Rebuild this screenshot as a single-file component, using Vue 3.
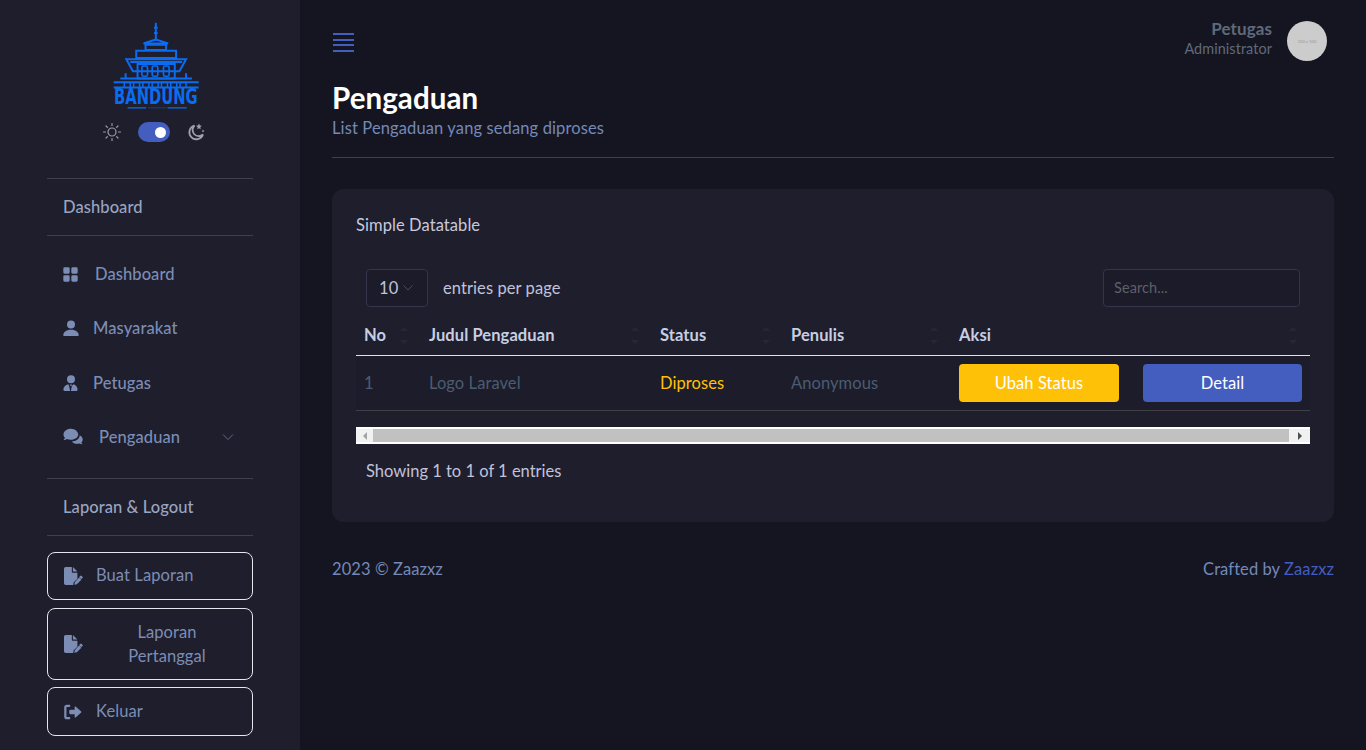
<script setup>
const menu = [
  { label: 'Dashboard', icon: 'grid', gap: 'g1', box: '0.700 0.700 14.600 14.600' },
  { label: 'Masyarakat', icon: 'person', gap: 'g2', box: '0 0 16 16' },
  { label: 'Petugas', icon: 'tie', gap: 'g2', box: '0 0 16 16' },
  { label: 'Pengaduan', icon: 'chat', gap: 'g3', box: '0 0.500 20 16', chevron: true },
]
const paths = {
  grid: 'M1 2.300A1.300 1.300 0 0 1 2.300 1h3.600a1.300 1.300 0 0 1 1.300 1.300v3.600a1.300 1.300 0 0 1-1.300 1.300H2.300A1.300 1.300 0 0 1 1 5.900zm7.800 0A1.300 1.300 0 0 1 10.100 1h3.600A1.300 1.300 0 0 1 15 2.300v3.600a1.300 1.300 0 0 1-1.300 1.300h-3.600a1.300 1.300 0 0 1-1.300-1.300zM1 10.100a1.300 1.300 0 0 1 1.300-1.300h3.600a1.300 1.300 0 0 1 1.300 1.300v3.600A1.300 1.300 0 0 1 5.900 15H2.300A1.300 1.300 0 0 1 1 13.700zm7.800 0a1.300 1.300 0 0 1 1.300-1.300h3.600a1.300 1.300 0 0 1 1.300 1.300v3.600a1.300 1.300 0 0 1-1.300 1.300h-3.600a1.300 1.300 0 0 1-1.300-1.300z',
  person: 'M1.300 16c-.7 0-1-.4-1-1 0-2.600 2.600-5.300 7.700-5.300s7.700 2.700 7.700 5.300c0 .6-.3 1-1 1H1.300zM8 8.400a4 4 0 1 0 0-8 4 4 0 0 0 0 8z',
  tie: 'M8 8.200a4 4 0 1 0 0-8 4 4 0 0 0 0 8zM5.300 9.300C2.400 9.800.4 12 .4 14.800c0 .7.5 1.200 1.100 1.200h5.600l-1-5.200zm5.400 0-1.800 1.500-1 5.200h5.600c.6 0 1.100-.5 1.100-1.200 0-2.800-2-5-3.900-5.500zM7 9.500h2L8.500 11h-1z',
  chat: 'M7.500 1C3.600 1 .5 3.400.5 6.500c0 1.300.5 2.400 1.400 3.300-.3.800-.9 1.500-1.400 2 1.300 0 2.400-.4 3.200-1 1 .5 2.300.7 3.800.7 3.900 0 7-2.300 7-5S11.400 1 7.500 1zM16 7c0 3.400-3.300 6-7.600 6.200 1 1.400 2.900 2.300 5 2.300.8 0 1.500-.1 2.200-.3.800.5 1.900.8 3 .8-.4-.5-.9-1.100-1.200-1.800.9-.8 1.400-1.800 1.400-2.900 0-1.800-1.200-3.300-3-4.100.1.200.2.500.2.800z',
  file: 'M1.500 0A1.500 1.500 0 0 0 0 1.500v13A1.500 1.500 0 0 0 1.500 16h6.700l.5-2.300L12 10.400V5H7.800A.8.800 0 0 1 7 4.200V0H1.500zM8 0v4h4L8 0zm8.500 8.600-.7-.7a.9.900 0 0 0-1.300 0l-1 1 2 2 1-1a.9.900 0 0 0 0-1.300zM9.700 13.600l-.5 2.300 2.300-.5 4-4-2-2-3.800 4.200z',
  logout: 'M5.500 1.500h-3A2.300 2.300 0 0 0 .2 3.800v8.400a2.300 2.300 0 0 0 2.300 2.300h3v-2h-3a.3.300 0 0 1-.3-.3V3.800a.3.300 0 0 1 .3-.3h3zM10.700 3.200a.7.700 0 0 0-1.200.5V6H5.700a1 1 0 0 0-1 1v2a1 1 0 0 0 1 1h3.800v2.300a.7.700 0 0 0 1.200.5l4.700-4.300a.7.700 0 0 0 0-1z',
}
const columns = ['No', 'Judul Pengaduan', 'Status', 'Penulis', 'Aksi']
</script>

<template>
  <div class="app">
    <aside class="sidebar">
      <div class="brand">
        <svg class="logo" viewBox="95 30 265 270" fill="none" stroke="#0b6cf2" stroke-width="6">
          <path d="M227 38v54" stroke-width="6" />
          <path d="M227 50v6M227 66v6" stroke-width="11" />
          <path d="M227 88 190 100h74zM196 104v16h62v-16zM168 122v22h120v-22zM138 148h180l-20 36H158zM150 156h156" />
          <path d="M172 162v44h112v-44z" />
          <rect x="185" y="168" width="17" height="31" rx="5" stroke-width="5" />
          <rect x="216" y="168" width="17" height="31" rx="5" stroke-width="5" />
          <rect x="250" y="168" width="17" height="31" rx="5" stroke-width="5" />
          <path d="M120 206h216M100 217h256M100 233h256M136 190v16M318 190v16" />
          <path d="M132 232v-14h18v14M160 232v-14h18v14M188 232v-14h18v14M216 232v-14h18v14M244 232v-14h18v14M272 232v-14h18v14M300 232v-14h18v14" stroke-width="4.500" />
          <path d="M142 294h56M262 294h58" stroke-width="4" />
          <path d="M204 294h54" stroke-width="3" opacity=".45" />
          <text x="101" y="283" textLength="252" lengthAdjust="spacingAndGlyphs" class="logo-word">BANDUNG</text>
        </svg>
        <div class="mode">
          <svg class="mode-icon" viewBox="0 0 20 20" fill="none" stroke="#9a9aa8" stroke-width="1.200" stroke-linecap="round">
            <circle cx="10" cy="10" r="4" />
            <path d="M10 1.500v2M10 16.500v2M1.500 10h2M16.500 10h2M4 4l1.400 1.400M14.600 14.600 16 16M4 16l1.400-1.400M14.600 5.400 16 4" />
          </svg>
          <span class="switch"><span class="knob"></span></span>
          <svg class="mode-icon" viewBox="0 0 20 20" fill="none" stroke="#a0a0ae" stroke-width="1.800">
            <path d="M8.500 3.500a7 7 0 1 0 8.500 9 6 6 0 0 1-8.500-9z" />
            <path d="M13 1.500l.8 2 2 .3-1.500 1.400.4 2-1.700-1-1.700 1 .4-2L10 3.800l2-.3zM17 7.500l.5 1 1 .5-1 .5-.5 1-.5-1-1-.5 1-.5z" fill="#a0a0ae" stroke="none" />
          </svg>
        </div>
      </div>

      <div class="section-title first">Dashboard</div>
      <nav class="menu">
        <a v-for="item in menu" :key="item.label" class="menu-item">
          <svg class="nav-icon" :class="item.icon" :viewBox="item.box"><path :d="paths[item.icon]" /></svg>
          <span class="menu-label" :class="item.gap">{{ item.label }}</span>
          <svg v-if="item.chevron" class="chevron" viewBox="0 0 12 8" fill="none" stroke="#5f6a86" stroke-width="1"><path d="M1 1.500 6 6.500l5-5" /></svg>
        </a>
      </nav>

      <div class="section-title second">Laporan &amp; Logout</div>
      <div class="actions">
        <a class="action">
          <svg class="action-icon" viewBox="0 0 17 16"><path :d="paths.file" /></svg>
          <span class="single">Buat Laporan</span>
        </a>
        <a class="action tall">
          <svg class="action-icon" viewBox="0 0 17 16"><path :d="paths.file" /></svg>
          <span class="wrap">Laporan<br />Pertanggal</span>
        </a>
        <a class="action last">
          <svg class="action-icon" viewBox="0 0 17 16"><path :d="paths.logout" /></svg>
          <span class="single">Keluar</span>
        </a>
      </div>
    </aside>

    <main class="main">
      <header class="topbar">
        <div class="burger"><i></i><i></i><i></i><i></i></div>
        <div class="user">
          <div class="user-text">
            <strong>Petugas</strong>
            <span>Administrator</span>
          </div>
          <div class="avatar"><span>100 x 100</span></div>
        </div>
      </header>

      <section class="heading">
        <h1>Pengaduan</h1>
        <p>List Pengaduan yang sedang diproses</p>
      </section>

      <section class="card">
        <div class="card-title">Simple Datatable</div>
        <div class="tools">
          <div class="per-page">
            <div class="select">
              <span>10</span>
              <svg viewBox="0 0 12 8" fill="none" stroke="#4a4a5e" stroke-width="1"><path d="M1.500 1.500 6 6l4.500-4.500" /></svg>
            </div>
            <span class="per-label">entries per page</span>
          </div>
          <div class="search"><span>Search...</span></div>
        </div>

        <div class="table">
          <div class="row head">
            <div v-for="c in columns" :key="c" class="th">
              <span>{{ c }}</span>
              <span class="sort"><i class="up"></i><i class="down"></i></span>
            </div>
          </div>
          <div class="row body">
            <div class="td dim">1</div>
            <div class="td dim">Logo Laravel</div>
            <div class="td warn">Diproses</div>
            <div class="td dim">Anonymous</div>
            <div class="td btns">
              <button class="btn yellow">Ubah Status</button>
              <button class="btn blue">Detail</button>
            </div>
          </div>
        </div>

        <div class="scrollbar">
          <span class="arrow left"></span>
          <span class="thumb"></span>
          <span class="arrow right"></span>
        </div>

        <div class="info">Showing 1 to 1 of 1 entries</div>
      </section>

      <footer class="footer">
        <span>2023 © Zaazxz</span>
        <span>Crafted by <a>Zaazxz</a></span>
      </footer>
    </main>
  </div>
</template>

<style>
html, body { margin: 0; background: #151521; }
</style>

<style scoped>
.app {
  display: flex;
  height: 750px;
  overflow: hidden;
  font-family: "Lato", "Open Sans", sans-serif;
  font-size: 16.500px;
  letter-spacing: .08px;
  color: #c2c2d9;
  background: #151521;
}
.sidebar {
  width: 300px;
  flex: none;
  box-sizing: border-box;
  padding: 20px 47px 0;
  background: #1e1e2d;
}
.brand { display: flex; flex-direction: column; align-items: center; padding-left: 8px; }
.logo { width: 88px; height: 90px; margin-left: 4px; display: block; overflow: visible; }
.logo-word { font: 900 62px "DejaVu Sans", sans-serif; fill: #0b6cf2; stroke: none; letter-spacing: 0; }
.mode { display: flex; align-items: center; gap: 16px; margin-top: 12px; height: 20px; }
.mode-icon { width: 20px; height: 20px; }
.switch {
  width: 32px; height: 20px; border-radius: 10px; background: #435ebe;
  display: flex; align-items: center; justify-content: flex-end; padding-right: 4px; box-sizing: border-box;
}
.knob { width: 11px; height: 11px; background: #fff; border-radius: 50%; }
.section-title {
  display: flex;
  align-items: center;
  padding: 0 0 0 16px;
  box-sizing: border-box;
  color: #9aa5c2;
  font-weight: 500;
  border-top: 1px solid #3f3f50;
  border-bottom: 1px solid #3f3f50;
}
.section-title.first { margin-top: 36px; height: 58px; }
.section-title.second { margin-top: 14px; height: 58px; }
.menu { display: flex; flex-direction: column; padding-top: 11px; }
.menu-item {
  height: 54.250px;
  display: flex;
  align-items: center;
  padding-left: 16px;
  color: #7c8db5;
  font-weight: 500;
}
.nav-icon { width: 16px; height: 16px; fill: #7c8db5; flex: none; }
.nav-icon.grid { width: 15px; height: 15px; margin-right: 1px; }
.nav-icon.chat { width: 21px; height: 17px; }
.menu-label.g1 { margin-left: 16px; }
.menu-label.g2 { margin-left: 14px; }
.menu-label.g3 { margin-left: 15px; }
.chevron { width: 12px; height: 8px; margin-left: auto; margin-right: 19px; }
.actions { display: flex; flex-direction: column; gap: 8px; margin-top: 16px; }
.action {
  display: flex;
  align-items: center;
  box-sizing: border-box;
  height: 48px;
  padding-left: 16px;
  border: 1px solid #e6e6ee;
  border-radius: 8px;
  color: #7c8db5;
}
.action.tall { height: 72px; }
.action.last { height: 49px; margin-top: -1px; }
.single { padding-bottom: 2px; }
.action-icon { width: 19px; height: 18px; fill: #7c8db5; margin-right: 13px; flex: none; }
.wrap { flex: 1; text-align: center; line-height: 24px; padding-right: 14px; }

.main { flex: 1; min-width: 0; box-sizing: border-box; padding: 21px 32px 0; }
.topbar { display: flex; justify-content: space-between; align-items: center; height: 40px; }
.burger { display: flex; flex-direction: column; gap: 3.500px; margin-left: 1px; padding-top: 3px; }
.burger i { display: block; width: 21px; height: 2px; background: #435ebe; }
.user { display: flex; align-items: center; gap: 15px; margin-right: 7px; }
.user-text { display: flex; flex-direction: column; align-items: flex-end; color: #5f6a7a; padding-bottom: 5px; }
.user-text strong { font-size: 17px; font-weight: 700; line-height: 20px; }
.user-text span { font-size: 14.400px; line-height: 20px; }
.avatar {
  width: 40px; height: 40px; border-radius: 50%; background: #cccccc;
  display: flex; align-items: center; justify-content: center;
  color: #969696; font-size: 4px;
}
.heading { margin-top: 19px; padding-bottom: 17px; border-bottom: 1px solid #3f3f50; }
.heading h1 { margin: 0; font-size: 29.500px; line-height: 36px; font-weight: 700; color: #fff; }
.heading p { margin: 0; color: #7389b8; line-height: 24px; letter-spacing: .12px; }
.card {
  margin-top: 31px;
  height: 333px;
  box-sizing: border-box;
  padding: 24px;
  background: #1e1e2d;
  border-radius: 12px;
}
.card-title { line-height: 24px; color: #c9c9dc; }
.tools { display: flex; justify-content: space-between; align-items: center; margin-top: 32px; padding: 0 10px; }
.per-page { display: flex; align-items: center; gap: 15px; }
.select {
  width: 62px; height: 38px; box-sizing: border-box; padding-left: 12px;
  display: flex; align-items: center; gap: 4px;
  background: #1b1b29; border: 1px solid #35354a; border-radius: 4px; color: #c2c2d9;
}
.select svg { width: 12px; height: 8px; }
.per-label { color: #c2c2d9; }
.search {
  width: 197px; height: 38px; box-sizing: border-box; padding: 0 0 2px 10px;
  display: flex; align-items: center;
  background: #1b1b29; border: 1px solid #35354a; border-radius: 4px;
  color: #5f6068; font-size: 14.500px;
}
.row { display: grid; grid-template-columns: 65px 231px 131px 168px 359px; }
.row.head { height: 49px; border-bottom: 1px solid #dee2e6; box-sizing: border-box; }
.th {
  display: flex; justify-content: space-between; align-items: center;
  padding: 8px 13px 0 8px; box-sizing: border-box; font-weight: 700; color: #c7cee2;
}
.sort { display: flex; flex-direction: column; gap: 9px; }
.sort i { display: block; width: 0; height: 0; border-left: 4px solid transparent; border-right: 4px solid transparent; }
.sort .up { border-bottom: 4px solid #262636; }
.sort .down { border-top: 4px solid #262636; }
.row.body { height: 55px; background: #1c1c2a; border-bottom: 1px solid #3f3f45; box-sizing: border-box; }
.td { display: flex; align-items: center; padding-left: 8px; }
.dim { color: #4b5c72; }
.warn { color: #ffc107; }
.btns { gap: 24px; }
.btn {
  height: 38px; border: 0; border-radius: 4px; color: #fff;
  font: inherit; letter-spacing: inherit; padding: 0;
}
.yellow { width: 160px; background: #ffc107; }
.blue { width: 159px; background: #435ebe; }
.scrollbar {
  margin-top: 16px; height: 17px; background: #f1f1f1;
  display: flex; align-items: center; box-sizing: border-box;
  border-top: 2px solid #fff; border-bottom: 2px solid #fff;
}
.thumb { flex: 1; height: 13px; background: #c1c1c1; }
.arrow { width: 17px; display: flex; align-items: center; justify-content: center; }
.arrow::before { content: ""; border-top: 4px solid transparent; border-bottom: 4px solid transparent; }
.arrow.left::before { border-right: 4px solid #a3a3a3; }
.arrow.right { width: 21px; }
.arrow.right::before { border-left: 4px solid #505050; }
.info { margin-top: 15px; padding-left: 10px; line-height: 24px; color: #c2c2d9; letter-spacing: 0; }
.footer { display: flex; justify-content: space-between; margin-top: 35px; line-height: 24px; color: #7389b8; }
.footer a { color: #435ebe; }
</style>
